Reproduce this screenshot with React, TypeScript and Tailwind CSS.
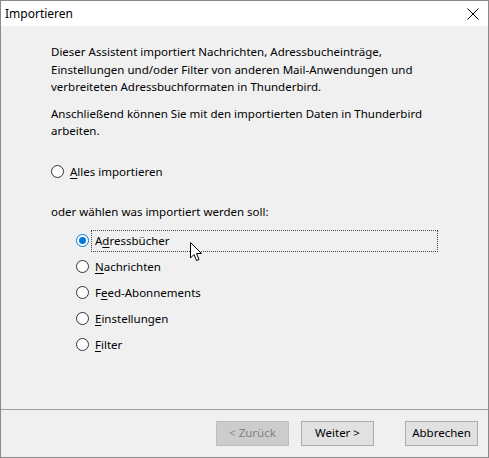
import React from 'react'

const font = { fontFamily: '"Noto Sans", "Liberation Sans", sans-serif' }

const Radio = ({checked=false}:{checked?:boolean}) => {
  if (checked) {
    return (
      <span className="w-[13px] h-[13px] rounded-full border border-[#0078d7] bg-white flex items-center justify-center shrink-0">
        <span className="w-[7px] h-[7px] rounded-full bg-[#0078d7]"></span>
      </span>
    )
  }
  return <span className="w-[13px] h-[13px] rounded-full border border-[#333333] bg-white shrink-0"></span>
}

const Option = ({pre,key1,post,checked=false}:any) => (
  <div className="flex items-center h-[26px]">
    <Radio checked={checked} />
    <span className="ml-[6px]">{pre}<span className="underline underline-offset-2">{key1}</span>{post}</span>
  </div>
)

const Cursor = () => (
  <svg className="absolute left-[189px] top-[241px]" width="13" height="20" viewBox="0 0 13 20">
    <path d="M0.5 0.5 L0.5 16 L4 12.5 L6.5 18.5 L9 17.5 L6.5 11.5 L11.5 11.5 Z" fill="white" stroke="black" strokeWidth="1" strokeLinejoin="miter" />
  </svg>
)

export default function App() {
  return (
    <div className="relative w-[489px] h-[458px] border border-[#8a8a8a] bg-[#f0f0f0] flex flex-col text-[11.5px] text-black" style={font}>
      <div className="h-[25px] bg-white flex items-center justify-between pl-[4px] pr-[9px]">
        <span className="text-[12px]">Importieren</span>
        <svg width="12" height="12" viewBox="0 0 12 12">
          <path d="M0.5 0.5 L11.5 11.5 M11.5 0.5 L0.5 11.5" stroke="black" strokeWidth="1" />
        </svg>
      </div>
      <div className="flex-1 pl-[50px] pt-[17px] pr-[45px] flex flex-col">
        <p className="leading-[17.5px]">Dieser Assistent importiert Nachrichten, Adressbucheinträge, Einstellungen und/oder Filter von anderen Mail-Anwendungen und verbreiteten Adressbuchformaten in Thunderbird.</p>
        <p className="leading-[17.5px] mt-[9px]">Anschließend können Sie mit den importierten Daten in Thunderbird arbeiten.</p>
        <div className="mt-[19px]">
          <Option pre="" key1="A" post="lles importieren" />
        </div>
        <p className="mt-[18px] leading-[17px]">oder wählen was importiert werden soll:</p>
        <div className="mt-[8px] pl-[25px] flex flex-col">
          <div className="flex items-center h-[26px]">
            <Radio checked />
            <span className="ml-[2px] flex-1 mr-[5px] h-[22px] flex items-center pl-[3px] border border-dotted border-[#444]">A<span className="underline underline-offset-2">d</span>ressbücher</span>
          </div>
          <Option pre="" key1="N" post="achrichten" />
          <Option pre="F" key1="e" post="ed-Abonnements" />
          <Option pre="" key1="E" post="instellungen" />
          <Option pre="" key1="F" post="ilter" />
        </div>
      </div>
      <div className="border-t border-[#a0a0a0] h-[48px] flex items-center justify-end pr-[10px] pb-[1px]">
        <button className="w-[73px] h-[25px] bg-[#cccccc] border border-[#bfbfbf] text-[#838383]">&lt; Zurück</button>
        <button className="w-[73px] h-[25px] bg-[#e1e1e1] border border-[#adadad] ml-[12px]">Weiter &gt;</button>
        <button className="w-[73px] h-[25px] bg-[#e1e1e1] border border-[#adadad] ml-[31px]">Abbrechen</button>
      </div>
      <Cursor />
    </div>
  )
}
